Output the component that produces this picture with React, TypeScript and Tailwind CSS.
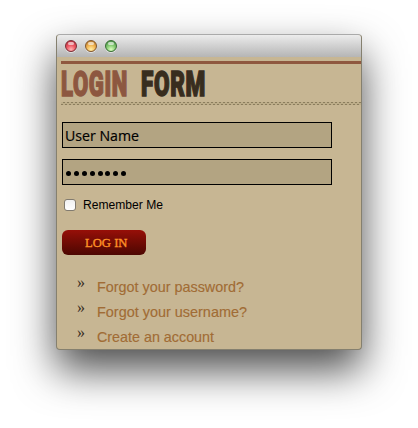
import React from "react";

const links = [
  { label: "Forgot your password?", width: 147 },
  { label: "Forgot your username?", width: 150 },
  { label: "Create an account", width: 117 },
];

const lights = [
  "border-[#7d2b33] bg-[radial-gradient(circle_at_50%_85%,#ffb4b4_0%,#ee5763_45%,#a92735_100%)]",
  "border-[#83562a] bg-[radial-gradient(circle_at_50%_85%,#fff0a8_0%,#f3b653_45%,#a96d24_100%)]",
  "border-[#376e32] bg-[radial-gradient(circle_at_50%_85%,#dcffc0_0%,#86cc73_45%,#3b803d_100%)]",
];

function Fit({ text, width, baseline, className }: { text: string; width: number; baseline: number; className: string }) {
  return (
    <svg width={width + 3} height={baseline + 6} className="block shrink-0 overflow-visible">
      <text x="0" y={baseline} textLength={width} lengthAdjust="spacingAndGlyphs" className={className}>
        {text}
      </text>
    </svg>
  );
}

export default function App() {
  return (
    <div className="h-[428px] w-[418px] overflow-hidden bg-white pl-[56px] pt-[34px] font-['Liberation_Sans',Arial,sans-serif]">
      <main className="h-[316px] w-[306px] rounded-[4px] border border-[#85806f] border-t-[#aaa] bg-[#c7b693] shadow-[0_20px_42px_0px_rgba(0,0,0,0.7)]">
        <header className="flex h-[22px] items-center gap-[8px] rounded-t-[3px] bg-linear-to-b from-[#ececec] to-[#b5b5b5] pl-[8px]">
          {lights.map((c) => (
            <span key={c} className={`flex size-[12px] justify-center rounded-full border shadow-[0_1px_0_rgba(255,255,255,0.5)] ${c}`}>
              <span className="mt-px h-[3px] w-[6px] rounded-full bg-white/60" />
            </span>
          ))}
        </header>
        <div className="pl-[4px] pt-[4px]">
          <div className="h-[3px] bg-[#8f583f]" />
          <h1 className="flex h-[38px] pt-[5px] font-['Roboto',sans-serif]">
            <Fit text="LOGIN" width={67} baseline={26.5} className="fill-[#8d5740] stroke-[#8d5740] stroke-[1.5px] text-[35px] font-black tracking-[1px]" />
            <span className="w-[10px]" />
            <Fit text="FORM" width={65} baseline={26.5} className="fill-[#382d1e] stroke-[#382d1e] stroke-[1.5px] text-[35px] font-black tracking-[1px]" />
          </h1>
          <div className="h-[3px] bg-[#b3a37f] bg-[repeating-conic-gradient(#8b7d5d_0_25%,#bdad89_0_50%)] bg-size-[4px_3px]" />
          <form className="pl-px pt-[17px]" onSubmit={(e) => e.preventDefault()}>
            <div className="h-[26px] w-[270px] border border-black bg-[#b3a482] pl-[2px]">
              <Fit text="User Name" width={74} baseline={18} className="fill-black stroke-black stroke-[0.2px] font-['Open_Sans',sans-serif] text-[15px]" />
            </div>
            <div className="mt-[11px] flex h-[26px] w-[270px] items-center gap-[2.9px] border border-black bg-[#b3a482] pl-[3px] pt-[3px]">
              {Array.from({ length: 8 }, (_, i) => (
                <span key={i} className="size-[5px] rounded-full bg-black" />
              ))}
            </div>
            <label className="mt-[12px] flex h-[16px] items-center pl-[2px]">
              <span className="size-[12px] rounded-[3px] border border-[#817b70] bg-linear-to-b from-[#f1f1f1] to-white" />
              <span className="w-[7px]" />
              <Fit text="Remember Me" width={80} baseline={14} className="fill-black text-[12px]" />
            </label>
            <button className="mt-[17px] block h-[25px] w-[84px] rounded-[6px] bg-linear-to-b from-[#970f08] to-[#4d0702] pl-[23px]">
              <Fit text="LOG IN" width={42.5} baseline={13.5} className="fill-[#ff9226] stroke-[#ff9226] stroke-[0.35px] font-['Liberation_Serif',serif] text-[13.5px]" />
            </button>
          </form>
          <ul className="mt-[20px] pl-[16px]">
            {links.map((l) => (
              <li key={l.label} className="flex h-[25px]">
                <span className="w-[20px] font-['Liberation_Serif',serif] text-[16px] leading-[15px] text-[#382d1e]">»</span>
                <Fit text={l.label} width={l.width} baseline={17} className="fill-[#a16c35] stroke-[#a16c35] stroke-[0.15px] text-[15px]" />
              </li>
            ))}
          </ul>
        </div>
      </main>
    </div>
  );
}
